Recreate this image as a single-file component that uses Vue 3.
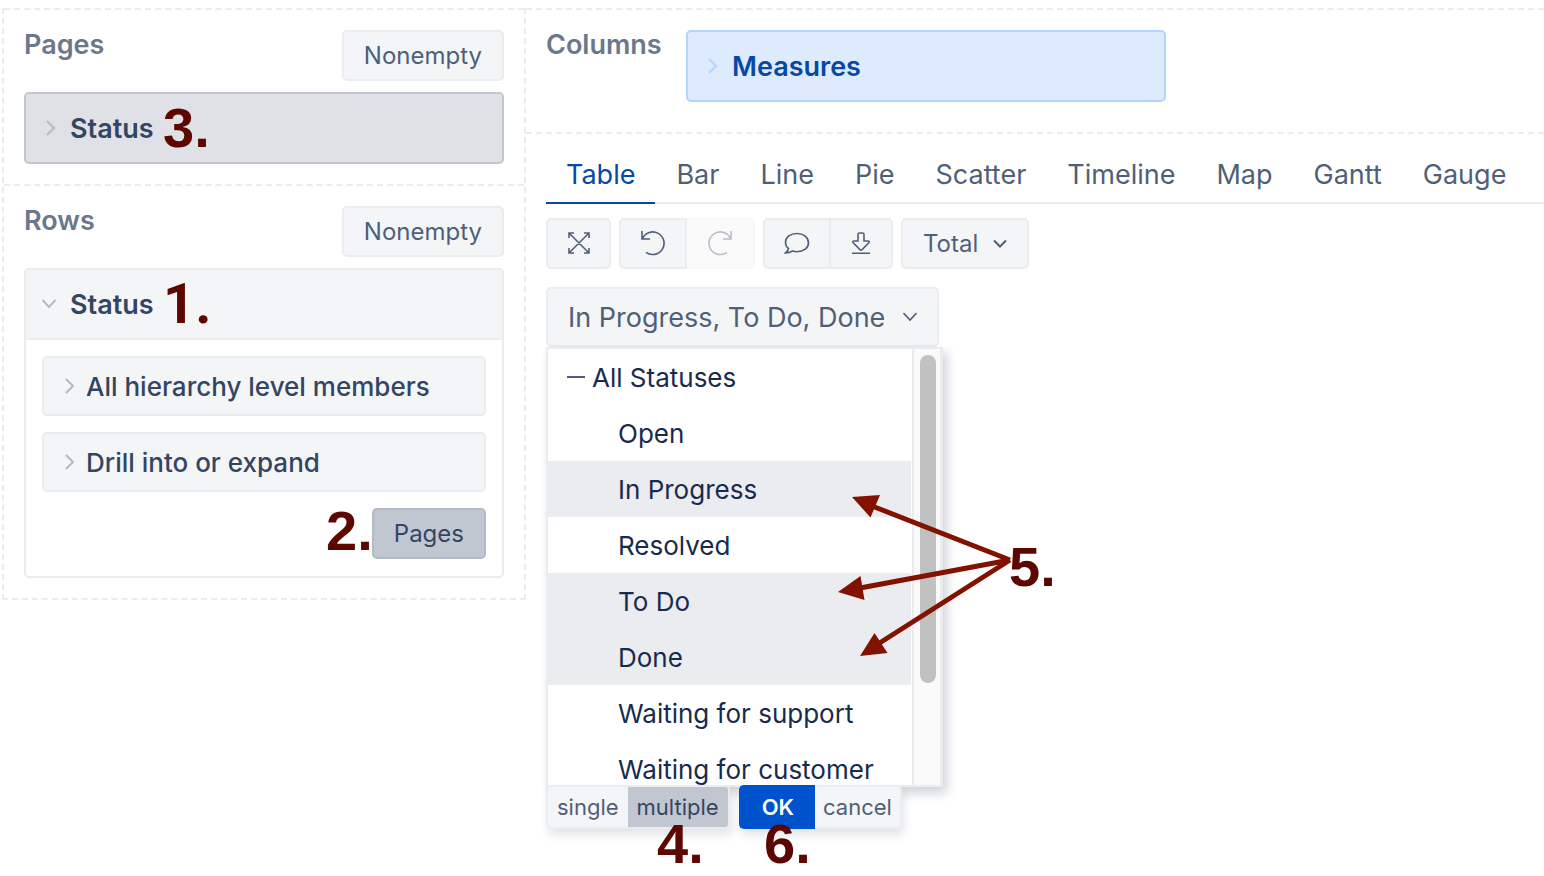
<script setup>
import { ref } from 'vue'

const tabs = ['Table', 'Bar', 'Line', 'Pie', 'Scatter', 'Timeline', 'Map', 'Gantt', 'Gauge']
const activeTab = ref('Table')

const rowActions = ['All hierarchy level members', 'Drill into or expand']

const members = ['Open', 'In Progress', 'Resolved', 'To Do', 'Done', 'Waiting for support', 'Waiting for customer']
const selected = ref(['In Progress', 'To Do', 'Done'])
const mode = ref('multiple')

const steps = [
  { label: '1.', x: 163, y: 272, footless: true },
  { label: '2.', x: 326, y: 499 },
  { label: '3.', x: 163, y: 96 },
  { label: '4.', x: 657, y: 812 },
  { label: '5.', x: 1009, y: 535 },
  { label: '6.', x: 764, y: 812 }
]

const toggleMember = (name) => {
  if (mode.value === 'single') {
    selected.value = [name]
  } else if (selected.value.includes(name)) {
    selected.value = selected.value.filter((item) => item !== name)
  } else {
    selected.value = members.filter((item) => item === name || selected.value.includes(item))
  }
}
</script>

<template>
  <div class="report">
    <aside class="sidebar">
      <section class="zone">
        <div class="zone-head">
          <h2 class="zone-title">Pages</h2>
          <button type="button" class="btn">Nonempty</button>
        </div>
        <button type="button" class="dimension dimension-used">
          <svg class="chevron" viewBox="0 0 16 16"><path d="M5 1l7 7-7 7" /></svg>
          Status
        </button>
      </section>

      <section class="zone zone-last">
        <div class="zone-head">
          <h2 class="zone-title">Rows</h2>
          <button type="button" class="btn">Nonempty</button>
        </div>
        <div class="card">
          <button type="button" class="card-head">
            <svg class="chevron chevron-open" viewBox="0 0 14 16"><path d="M0.500 4l6.500 7 6.500-7" /></svg>
            Status
          </button>
          <div class="card-body">
            <button v-for="action in rowActions" :key="action" type="button" class="action">
              <svg class="chevron" viewBox="0 0 16 16"><path d="M4 1l7 7-7 7" /></svg>
              {{ action }}
            </button>
            <button type="button" class="btn btn-pressed">Pages</button>
          </div>
        </div>
      </section>
    </aside>

    <main class="main">
      <section class="columns">
        <h2 class="zone-title columns-title">Columns</h2>
        <button type="button" class="dimension dimension-measures">
          <svg class="chevron" viewBox="0 0 16 16"><path d="M5 1l7 7-7 7" /></svg>
          Measures
        </button>
      </section>

      <nav class="tabs">
        <button
          v-for="tab in tabs"
          :key="tab"
          type="button"
          class="tab"
          :class="{ active: tab === activeTab }"
          @click="activeTab = tab"
        >
          {{ tab }}
        </button>
      </nav>

      <div class="toolbar">
        <button type="button" class="btn tool" aria-label="Full screen">
          <svg class="icon" viewBox="0 0 24 24">
            <path d="M2 2l20 20M22 2L2 22M2 7V2h5M17 2h5v5M22 17v5h-5M7 22H2v-5" />
          </svg>
        </button>
        <div class="group">
          <button type="button" class="btn tool" aria-label="Undo">
            <svg class="icon icon-large" viewBox="0 0 26 26">
              <path d="M2 1v8h8M2.500 8.500A11.300 11.300 0 1 1 6 22.300" />
            </svg>
          </button>
          <button type="button" class="btn tool" aria-label="Redo" disabled>
            <svg class="icon icon-large" viewBox="0 0 26 26">
              <path d="M24 1v8h-8M23.500 8.500A11.300 11.300 0 1 0 20 22.300" />
            </svg>
          </button>
        </div>
        <div class="group">
          <button type="button" class="btn tool" aria-label="Comment">
            <svg class="icon icon-large" viewBox="0 0 26 26">
              <path d="M4.500 18.500C2.500 17 1.500 15 1.500 12.500 1.500 7 6.500 3.500 13 3.500s11.500 3.800 11.500 9.200-5 9-11.500 9c-1.500 0-3-.3-4.500-.7-2 1.300-4.500 2-7 2 1.800-1.200 2.700-2.700 3-4.500z" />
            </svg>
          </button>
          <button type="button" class="btn tool tool-narrow" aria-label="Download">
            <svg class="icon" viewBox="0 0 24 24">
              <path d="M9 3.500q0-1.500 1.500-1.500h3q1.500 0 1.500 1.500V10h4q2 .3.800 1.800l-6.500 6.500q-1.300 1.200-2.600 0L4.200 11.800Q3 10.300 5 10h4zM3 22.200h18" />
            </svg>
          </button>
        </div>
        <button type="button" class="btn total">
          Total
          <svg class="caret" viewBox="0 0 14 16"><path d="M1 4.500l6 6 6-6" /></svg>
        </button>
      </div>

      <div class="picker">
        <button type="button" class="picker-toggle">
          {{ selected.join(', ') }}
          <svg class="caret caret-thin" viewBox="0 0 14 16"><path d="M0.500 4l6.500 7 6.500-7" /></svg>
        </button>
        <div class="menu">
          <ul class="members">
            <li class="root">
              <button type="button" class="collapse" aria-label="Collapse"></button>
              All Statuses
            </li>
            <li v-for="name in members" :key="name">
              <button
                type="button"
                class="member"
                :class="{ chosen: selected.includes(name) }"
                @click="toggleMember(name)"
              >
                {{ name }}
              </button>
            </li>
          </ul>
          <div class="track"><div class="thumb"></div></div>
        </div>
        <div class="picker-foot">
          <div class="foot-group">
            <button type="button" class="small" :class="{ on: mode === 'single' }" @click="mode = 'single'">single</button>
            <button type="button" class="small" :class="{ on: mode === 'multiple' }" @click="mode = 'multiple'">multiple</button>
          </div>
          <div class="foot-group">
            <button type="button" class="small ok">OK</button>
            <button type="button" class="small cancel">cancel</button>
          </div>
        </div>
      </div>
    </main>

    <svg class="arrows" width="180" height="170" viewBox="0 0 180 170">
      <path class="shaft" d="M172 70L34 16M172 70L22 98M172 70L40 154" />
      <path class="head" d="M14 7l28-2-9.500 22.500zM0 102l22.500-16 4 24zM22 166l14.500-23 13 20z" />
    </svg>
    <span
      v-for="step in steps"
      :key="step.label"
      class="step"
      :class="{ footless: step.footless }"
      :style="{ left: step.x + 'px', top: step.y + 'px' }"
    >{{ step.label }}</span>
  </div>
</template>

<style>
body {
  background: #fff;
}
</style>

<style scoped>
.report {
  position: relative;
  display: flex;
  align-items: flex-start;
  min-height: 100vh;
  padding: 8px 0 0 2px;
  overflow: hidden;
  box-sizing: border-box;
  font-family: Inter, "Liberation Sans", sans-serif;
  color: #505f79;
}

.report * {
  box-sizing: border-box;
}

button {
  margin: 0;
  font-family: inherit;
  color: inherit;
  white-space: nowrap;
  cursor: pointer;
}

svg {
  flex: none;
  fill: none;
  stroke: currentColor;
}

.sidebar {
  flex: 0 0 524px;
  border: 2px dashed #ebecf0;
  border-top: 0;
}

.zone {
  padding: 20px;
  border-top: 2px dashed #ebecf0;
}

.zone-head {
  display: flex;
  justify-content: space-between;
  align-items: flex-start;
  margin-bottom: 11px;
}

.zone-title {
  margin: 0;
  font-size: 27px;
  line-height: 30px;
  font-weight: 600;
  color: #6b778c;
}

.btn {
  display: flex;
  align-items: center;
  justify-content: center;
  height: 51px;
  padding: 0 20px;
  border: 2px solid #ebecf0;
  border-radius: 5px;
  background: #f4f5f7;
  font-size: 24px;
}

.btn-pressed {
  align-self: flex-end;
  border-color: #b3bac5;
  background: #c1c7d0;
  color: #344563;
}

.dimension {
  display: flex;
  align-items: center;
  gap: 12px;
  width: 100%;
  height: 72px;
  padding: 0 16px;
  border: 2px solid #c1c7d0;
  border-radius: 5px;
  font-size: 27px;
  font-weight: 600;
  text-align: left;
}

.dimension-used {
  background: #dfe1e6;
  color: #344563;
}

.chevron {
  width: 16px;
  height: 16px;
  stroke: #b3bac5;
  stroke-width: 2;
}

.card {
  border: 2px solid #ebecf0;
  border-radius: 5px;
}

.card-head {
  display: flex;
  align-items: center;
  gap: 14px;
  width: 100%;
  height: 70px;
  padding: 0 16px;
  border: 0;
  border-bottom: 2px solid #ebecf0;
  background: #f4f5f7;
  color: #344563;
  font-size: 27px;
  font-weight: 600;
}

.chevron-open {
  width: 14px;
}

.card-body {
  display: flex;
  flex-direction: column;
  gap: 16px;
  padding: 16px 16px 17px;
}

.action {
  display: flex;
  align-items: center;
  gap: 8px;
  height: 60px;
  padding: 0 18px;
  border: 2px solid #ebecf0;
  border-radius: 5px;
  background: #f4f5f7;
  color: #344563;
  font-size: 26px;
  font-weight: 500;
}

.main {
  flex: 1;
  min-width: 0;
}

.columns {
  display: flex;
  align-items: flex-start;
  padding: 20px 20px 30px;
  border: 2px dashed #ebecf0;
  border-width: 2px 0;
}

.columns-title {
  flex: 0 0 140px;
}

.dimension-measures {
  max-width: 480px;
  border-color: #b3d4ff;
  background: #deebff;
  color: #0747a6;
}

.dimension-measures .chevron {
  stroke: #b3d4ff;
}

.tabs {
  display: flex;
  gap: 1px;
  margin-left: 20px;
  border-bottom: 2px solid #ebecf0;
}

.tab {
  height: 70px;
  margin-bottom: -2px;
  padding: 12px 20px 0;
  border: 0;
  border-bottom: 2px solid transparent;
  background: none;
  font-size: 27px;
}

.tab.active {
  border-bottom-color: #0747a6;
  color: #0747a6;
}

.toolbar {
  display: flex;
  gap: 8px;
  margin: 14px 20px 18px;
}

.group {
  display: flex;
}

.tool {
  width: 65px;
  padding: 0 0 2px;
}

.group .tool {
  width: 68px;
}

.group .tool-narrow {
  width: 62px;
}

.group .tool:first-child {
  border-radius: 5px 0 0 5px;
}

.group .tool:last-child {
  border-left: 0;
  border-radius: 0 5px 5px 0;
}

.tool:disabled {
  opacity: 0.4;
  cursor: default;
}

.icon {
  width: 24px;
  height: 24px;
  stroke-width: 1.6;
}

.icon-large {
  width: 26px;
  height: 26px;
}

.total {
  gap: 15px;
}

.caret {
  width: 14px;
  height: 16px;
  stroke-width: 2;
}

.caret-thin {
  stroke-width: 1.6;
}

.picker {
  display: flex;
  flex-direction: column;
  align-items: flex-start;
  margin-left: 20px;
}

.picker-toggle {
  display: flex;
  align-items: center;
  gap: 18px;
  height: 60px;
  padding: 0 20px;
  border: 2px solid #ebecf0;
  border-radius: 5px;
  background: #f4f5f7;
  font-size: 27px;
}

.menu {
  position: relative;
  display: flex;
  width: 397px;
  height: 440px;
  border: 2px solid #ebecf0;
  border-right-width: 3px;
  background: #fff;
  box-shadow: 4px 6px 10px rgba(9, 30, 66, 0.2);
}

.members {
  flex: 1;
  margin: 0;
  padding: 0 1px 0 0;
  overflow: hidden;
  list-style: none;
  font-size: 26px;
  color: #172b4d;
}

.root {
  display: flex;
  align-items: center;
  gap: 7px;
  height: 56px;
  padding-left: 19px;
}

.collapse {
  width: 18px;
  height: 2px;
  padding: 0;
  border: 0;
  background: #505f79;
}

.member {
  display: block;
  width: 100%;
  height: 56px;
  padding: 0 0 0 70px;
  border: 0;
  background: none;
  font-size: 26px;
  text-align: left;
}

.member.chosen {
  background: #ebecf0;
}

.track {
  width: 28px;
  padding: 6px;
  border-left: 2px solid #ebecf0;
  background: #fafafa;
}

.thumb {
  width: 16px;
  height: 328px;
  border-radius: 8px;
  background: #c1c1c1;
}

.picker-foot {
  position: relative;
  display: flex;
  gap: 9px;
  margin-top: -2px;
}

.foot-group {
  display: flex;
  border-radius: 5px;
  box-shadow: 2px 6px 10px rgba(9, 30, 66, 0.12);
}

.small {
  height: 44px;
  padding: 0 9px;
  border: 2px solid #ebecf0;
  border-right-width: 0;
  border-radius: 5px 0 0 5px;
  background: #f4f5f7;
  font-size: 22px;
}

.small:last-child {
  border-width: 2px 2px 2px 0;
  border-radius: 0 5px 5px 0;
}

.small.on {
  background: #c1c7d0;
  color: #344563;
}

.small.ok {
  padding: 0 21px;
  border-color: #0052cc;
  background: #0052cc;
  color: #fff;
  font-weight: 600;
}

.small.cancel {
  padding: 0 8px;
}

.arrows {
  position: absolute;
  left: 838px;
  top: 490px;
  pointer-events: none;
}

.shaft {
  stroke: #831100;
  stroke-width: 5;
}

.head {
  fill: #831100;
  stroke: none;
}

.step {
  position: absolute;
  font-family: "Liberation Sans", Arial, sans-serif;
  font-size: 56px;
  line-height: 64px;
  font-weight: 700;
  color: #5c0700;
  pointer-events: none;
}

/* numeral one without a base serif */
.step.footless {
  font-family: Roboto, "Liberation Sans", sans-serif;
}
</style>
